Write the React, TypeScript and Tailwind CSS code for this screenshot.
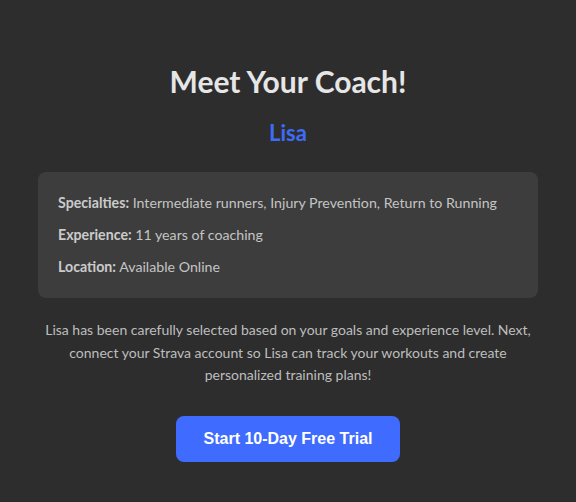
export default function App() {
  return (
    <div className="min-h-screen w-full bg-[#2d2d2d] flex flex-col items-center pt-[63px] font-['Segoe_UI','Lato','Noto_Sans',sans-serif]">
      <h1 className="text-[30px] leading-[36px] font-bold text-[#e6e6e6]">Meet Your Coach!</h1>
      <h2 className="mt-[20px] text-[22px] leading-[28px] font-bold text-[#3d6cf6]">Lisa</h2>

      {/* coach details */}
      <div className="mt-[25px] w-[500px] rounded-lg bg-[#3d3d3d] px-5 py-[21px] flex flex-col gap-3 text-[14.2px] leading-5 text-[#c4c4c4]">
        <p>
          <span className="font-bold text-[#cbcbcb]">Specialties:</span> Intermediate runners, Injury Prevention, Return to Running
        </p>
        <p>
          <span className="font-bold text-[#cbcbcb]">Experience:</span> 11 years of coaching
        </p>
        <p>
          <span className="font-bold text-[#cbcbcb]">Location:</span> Available Online
        </p>
      </div>

      <p className="mt-[21px] w-[500px] text-center text-[14px] leading-[22.5px] text-[#bdbdbd]">
        Lisa has been carefully selected based on your goals and experience level. Next, connect your Strava account so Lisa can track your workouts and create personalized training plans!
      </p>

      <button className="mt-[29px] w-[224px] h-[46px] rounded-lg bg-[#3f6bff] text-white text-[16px] font-bold font-['Liberation_Sans',Arial,sans-serif]">
        Start 10-Day Free Trial
      </button>
    </div>
  );
}
